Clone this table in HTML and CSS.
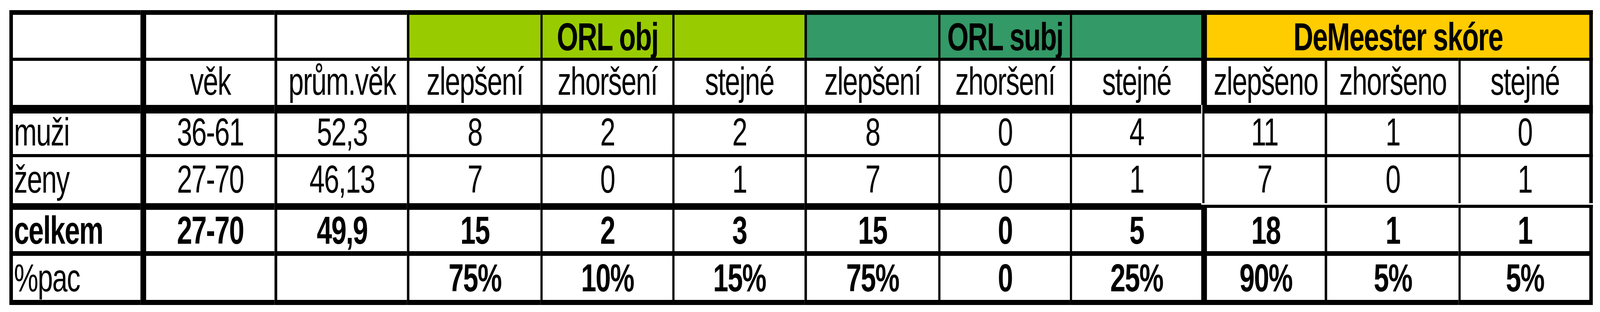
FILE: index.html
```html
<!DOCTYPE html>
<html lang="cs">
<head>
<meta charset="utf-8">
<title>Výsledky</title>
<link rel="stylesheet" href="styles.css">
</head>
<body>
<div class="frame">
<div class="sheet">
  <div class="row r1">
    <div class="c"></div><div class="c"></div><div class="c"></div>
    <div class="c lime"></div><div class="c lime b">ORL obj</div><div class="c lime"></div>
    <div class="c sea"></div><div class="c sea b">ORL subj</div><div class="c sea"></div>
    <div class="c gold b span3">DeMeester skóre</div>
  </div>
  <div class="row r2">
    <div class="c"></div><div class="c">věk</div><div class="c">prům.věk</div>
    <div class="c">zlepšení</div><div class="c">zhoršení</div><div class="c">stejné</div>
    <div class="c">zlepšení</div><div class="c">zhoršení</div><div class="c">stejné</div>
    <div class="c">zlepšeno</div><div class="c">zhoršeno</div><div class="c">stejné</div>
  </div>
  <div class="row r3 thin">
    <div class="c">muži</div><div class="c">36-61</div><div class="c">52,3</div>
    <div class="c">8</div><div class="c">2</div><div class="c">2</div>
    <div class="c">8</div><div class="c">0</div><div class="c">4</div>
    <div class="c">11</div><div class="c">1</div><div class="c">0</div>
  </div>
  <div class="row r4 thin">
    <div class="c">ženy</div><div class="c">27-70</div><div class="c">46,13</div>
    <div class="c">7</div><div class="c">0</div><div class="c">1</div>
    <div class="c">7</div><div class="c">0</div><div class="c">1</div>
    <div class="c">7</div><div class="c">0</div><div class="c">1</div>
  </div>
  <div class="row r5 b">
    <div class="c">celkem</div><div class="c">27-70</div><div class="c">49,9</div>
    <div class="c">15</div><div class="c">2</div><div class="c">3</div>
    <div class="c">15</div><div class="c">0</div><div class="c">5</div>
    <div class="c">18</div><div class="c">1</div><div class="c">1</div>
  </div>
  <div class="row r6">
    <div class="c">%pac</div><div class="c"></div><div class="c"></div>
    <div class="c b">75%</div><div class="c b">10%</div><div class="c b">15%</div>
    <div class="c b">75%</div><div class="c b">0</div><div class="c b">25%</div>
    <div class="c b">90%</div><div class="c b">5%</div><div class="c b">5%</div>
  </div>
</div>
</div>
</body>
</html>
```
FILE: styles.css
```css
html, body {
  margin: 0;
  background: #ffffff;
}

.frame {
  width: 100%;
  height: 800px;
  overflow: hidden;
}

.sheet {
  display: grid;
  grid-template-columns: 483px 494px 488px 492px 486px 487px 493px 485px 484px 455px 493px 495px;
  grid-template-rows: 122px 121px 126px 126px 123px 138px;
  width: 5835px;
  margin: 26px 0 0 35px;
  background: #ffffff;
  color: #000000;
  font-family: "Liberation Sans", Arial, sans-serif;
  font-size: 101px;
  letter-spacing: -2.5px;
  line-height: 1;
  transform-origin: 0 0;
}

@media (max-width: 5895px) {
  .sheet {
    margin-left: 24.32px;
    transform: scaleX(0.694708);
  }
}

.row {
  display: contents;
}

.c {
  box-sizing: border-box;
  border: 0 solid #000000;
  display: flex;
  align-items: flex-end;
  justify-content: center;
  white-space: nowrap;
  background: #ffffff;
}

.b { font-weight: bold; }
.lime { background: #99cc00; }
.sea { background: #339966; }
.gold { background: #ffcc00; }
.span3 { grid-column: span 3; }

/* vertical lines, per column */
.row > .c:nth-child(1) { border-left-width: 13px; justify-content: flex-start; padding-left: 4px; }
.row > .c:nth-child(2) { border-left-width: 21px; }
.row > .c:nth-child(3) { border-left-width: 10px; }
.row > .c:nth-child(4) { border-left-width: 9px; }
.row > .c:nth-child(5) { border-left-width: 8px; }
.row > .c:nth-child(6) { border-left-width: 8px; }
.row > .c:nth-child(7) { border-left-width: 9px; }
.row > .c:nth-child(8) { border-left-width: 8px; }
.row > .c:nth-child(9) { border-left-width: 8px; }
.row > .c:nth-child(10) { border-left-width: 21px; }
.row > .c:nth-child(11) { border-left-width: 9px; }
.row > .c:nth-child(12) { border-left-width: 8px; }
.row > .c:last-child { border-right-width: 13px; }

.thin > .c:nth-child(10) { border-left-width: 8px; margin-left: 4px; }

/* horizontal lines, per row */
.r1 > .c { border-top-width: 12px; padding-bottom: 3px; }
.r2 > .c { border-top-width: 8px; padding-bottom: 10px; }
.r3 > .c { border-top-width: 22px; padding-bottom: 6px; }
.r4 > .c { border-top-width: 8px; padding-bottom: 11px; }
.r5 > .c { border-top-width: 17px; padding-bottom: 3px; }
.r6 > .c { border-top-width: 12px; border-bottom-width: 13px; padding-bottom: 6px; }

.r6 > .c:nth-child(1) { font-weight: normal; }

.r5 > .c:nth-child(n+10) { border-top-width: 8px; margin-top: 4px; }
```
